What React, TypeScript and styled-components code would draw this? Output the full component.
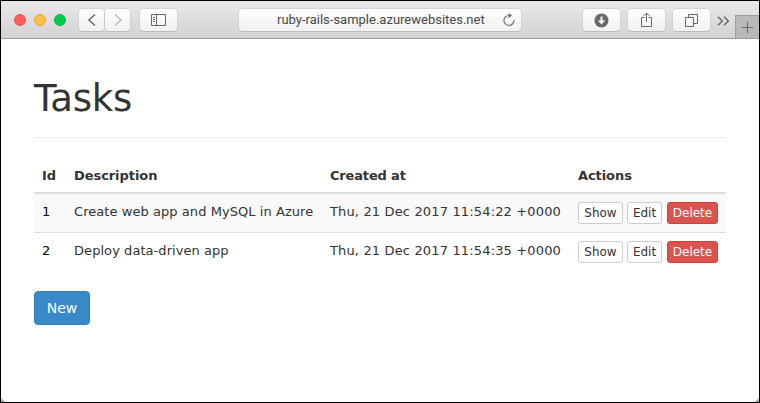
import React from "react";
import styled, { createGlobalStyle } from "styled-components";

const GlobalStyle = createGlobalStyle`
  * { box-sizing: border-box; }
  body { margin: 0; background: #000; overflow: hidden; }
`;

const Window = styled.div`
  width: 760px;
  height: 403px;
  border: 1px solid #000;
  background: #fff;
  color: #333;
  font-family: "DejaVu Sans", Verdana, sans-serif;
  font-size: 13px;
  white-space: nowrap;
`;

const Toolbar = styled.header`
  height: 38px;
  display: flex;
  align-items: flex-start;
  border-bottom: 1px solid #9d9b9d;
  background: linear-gradient(#ebe8eb, #d3d1d3);
`;

const Lights = styled.div`
  display: flex;
  gap: 8px;
  margin: 13px 13px 0 13px;
`;

const Light = styled.span<{ $fill: string; $edge: string }>`
  width: 12px;
  height: 12px;
  border-radius: 50%;
  background: ${(p) => p.$fill};
  border: 1px solid ${(p) => p.$edge};
`;

const ToolButton = styled.button<{ $width: number; $gap?: number }>`
  width: ${(p) => p.$width}px;
  height: 22px;
  margin: 8px ${(p) => p.$gap ?? 0}px 0 0;
  padding: 0;
  display: flex;
  align-items: center;
  justify-content: center;
  border: 0;
  border-radius: 4px;
  background: linear-gradient(#fefefe, #f2f1f2);
  box-shadow: 0 0 0 0.5px #c6c4c6, 0 1px 0.5px #b5b3b5;
`;

const Address = styled.div`
  width: 282px;
  height: 22px;
  margin: 8px 62px 0 0;
  display: flex;
  align-items: center;
  justify-content: space-between;
  padding: 0 5px 0 38px;
  border-radius: 4px;
  background: linear-gradient(#fefefe, #f2f1f2);
  box-shadow: 0 0 0 0.5px #c6c4c6, 0 1px 0.5px #b5b3b5;
  color: #484848;
  font: 13px/22px Roboto, sans-serif;
`;

const Overflow = styled.div`
  width: 18px;
  height: 37px;
  display: flex;
  align-items: center;
  padding-top: 2px;
`;

const NewTab = styled.div`
  flex: 1;
  height: 23px;
  margin-top: 14px;
  display: flex;
  align-items: center;
  justify-content: center;
  background: #bab8ba;
  border: solid #a09ea0;
  border-width: 1px 0 0 1px;
`;

const Page = styled.main`
  padding: 35px 33px 0;
`;

const Title = styled.h1`
  height: 64px;
  margin: 0 0 20px;
  border-bottom: 1px solid #eee;
  font-size: 37px;
  line-height: 50px;
  font-weight: 400;
  letter-spacing: -0.2px;
`;

const Table = styled.div`
  width: 692px;
`;

const Row = styled.div<{ $striped?: boolean; $last?: boolean }>`
  display: grid;
  grid-template-columns: 32px 256px 248px 156px;
  height: ${(p) => (p.$last ? 38 : 39)}px;
  padding-top: 8px;
  background: ${(p) => (p.$striped ? "#f9f9f9" : "#fff")};
  border-bottom: ${(p) => (p.$last ? 0 : 1)}px solid #ddd;
`;

const HeadRow = styled(Row)`
  height: 36px;
  border-bottom-width: 2px;
`;

const HeadCell = styled.div<{ $tracking?: number }>`
  padding: 0 8px;
  font: bold 13px/20px "DejaVu Sans", Verdana, sans-serif;
  letter-spacing: ${(p) => p.$tracking ?? 0}px;
`;

const Cell = styled.div<{ $dark?: boolean; $tracking?: number }>`
  padding: 0 8px;
  line-height: 20px;
  color: ${(p) => (p.$dark ? "#000" : "#333")};
  letter-spacing: ${(p) => p.$tracking ?? 0}px;
`;

const Actions = styled.div`
  display: flex;
  gap: 4px;
  padding: 0 8px;
`;

const ActionButton = styled.button<{ $width: number; $danger?: boolean }>`
  width: ${(p) => p.$width}px;
  height: 22px;
  margin-left: ${(p) => (p.$danger ? 1 : 0)}px;
  padding: 0;
  border: 1px solid ${(p) => (p.$danger ? "#d43f3a" : "#ccc")};
  border-radius: 3px;
  background: ${(p) => (p.$danger ? "#d9534f" : "#fff")};
  color: ${(p) => (p.$danger ? "#fff" : "#333")};
  font: 12px/20px "DejaVu Sans", Verdana, sans-serif;
`;

const NewButton = styled.button`
  width: 56px;
  height: 34px;
  margin-top: 20px;
  padding: 0;
  border: 1px solid #2e7ebb;
  border-radius: 4px;
  background: #3989c9;
  color: #fff;
  font: 14px/32px "DejaVu Sans", Verdana, sans-serif;
`;

const Icon = styled.svg`
  display: block;
  flex: none;
  fill: none;
  stroke: #686868;
`;

const Grip = styled.svg<{ $side: "left" | "right" }>`
  position: absolute;
  top: 398px;
  left: ${(p) => (p.$side === "left" ? 1 : 755)}px;
  transform: ${(p) => (p.$side === "left" ? "none" : "scaleX(-1)")};
`;

const tasks = [
  { id: 1, description: "Create web app and MySQL in Azure", created: "Thu, 21 Dec 2017 11:54:22 +0000" },
  { id: 2, description: "Deploy data-driven app", created: "Thu, 21 Dec 2017 11:54:35 +0000" },
];

export default function App() {
  return (
    <>
      <GlobalStyle />
      <Window>
        <Toolbar>
          <Lights>
            <Light $fill="#ff605b" $edge="#e8534f" />
            <Light $fill="#ffbf42" $edge="#e5a733" />
            <Light $fill="#00ca4e" $edge="#08b544" />
          </Lights>
          <ToolButton $width={25} $gap={1} aria-label="Back">
            <Icon width="10" height="14" viewBox="0 0 10 14">
              <path d="M8 1.5 2 7l6 5.5" strokeWidth="1.5" />
            </Icon>
          </ToolButton>
          <ToolButton $width={25} $gap={10} aria-label="Forward">
            <Icon width="10" height="14" viewBox="0 0 10 14">
              <path d="m2 1.5 6 5.5-6 5.5" stroke="#bcbcbc" strokeWidth="1.4" />
            </Icon>
          </ToolButton>
          <ToolButton $width={37} $gap={62} aria-label="Sidebar">
            <Icon width="15" height="12" viewBox="0 0 15 12">
              <path d="M.5.5h14v11H.5zM5.5.5v11M2 3.5h2M2 5.5h2M2 7.5h2" />
            </Icon>
          </ToolButton>
          <Address>
            <span>ruby-rails-sample.azurewebsites.net</span>
            <Icon width="14" height="14" viewBox="0 0 14 14">
              <path d="M11.9 7A5 5 0 1 1 7 2.5h1" stroke="#777" strokeWidth="1.2" />
              <path d="M6.5 0v5.2l3.7-2.6z" fill="#777" stroke="none" />
            </Icon>
          </Address>
          <ToolButton $width={37} $gap={8} aria-label="Downloads">
            <Icon width="15" height="15" viewBox="0 0 15 15">
              <circle cx="7.5" cy="7.5" r="7" fill="#686868" stroke="none" />
              <path d="M6.5 3.5h2v4h2.7l-3.7 4-3.7-4h2.7z" fill="#fff" stroke="none" />
            </Icon>
          </ToolButton>
          <ToolButton $width={37} $gap={8} aria-label="Share">
            <Icon width="13" height="16" viewBox="0 0 13 16">
              <path d="M4.5 5.5h-3v9h10v-9h-3M6.5 10V1M3.5 4l3-3 3 3" />
            </Icon>
          </ToolButton>
          <ToolButton $width={37} $gap={7} aria-label="Tabs">
            <Icon width="13" height="13" viewBox="0 0 13 13">
              <path d="M.5 3.5h8v9h-8zM3.5 3.5v-3h9v9h-4" />
            </Icon>
          </ToolButton>
          <Overflow>
            <Icon width="13" height="10" viewBox="0 0 13 10">
              <path d="m1 .7 4.3 4.3L1 9.3M7 .7 11.3 5 7 9.3" strokeWidth="1.5" />
            </Icon>
          </Overflow>
          <NewTab>
            <Icon width="11" height="11" viewBox="0 0 11 11">
              <path d="M5.5 0v11M0 5.5h11" />
            </Icon>
          </NewTab>
        </Toolbar>
        <Page>
          <Title>Tasks</Title>
          <Table>
            <HeadRow>
              <HeadCell>Id</HeadCell>
              <HeadCell $tracking={-0.07}>Description</HeadCell>
              <HeadCell $tracking={-0.17}>Created at</HeadCell>
              <HeadCell $tracking={-0.08}>Actions</HeadCell>
            </HeadRow>
            {tasks.map((task, i) => (
              <Row key={task.id} $striped={i % 2 === 0} $last={i === tasks.length - 1}>
                <Cell $dark>{task.id}</Cell>
                <Cell $tracking={0.06}>{task.description}</Cell>
                <Cell $tracking={0.15}>{task.created}</Cell>
                <Actions>
                  <ActionButton $width={45}>Show</ActionButton>
                  <ActionButton $width={35}>Edit</ActionButton>
                  <ActionButton $width={51} $danger>Delete</ActionButton>
                </Actions>
              </Row>
            ))}
          </Table>
          <NewButton>New</NewButton>
        </Page>
        <Grip $side="left" width="4" height="4" viewBox="0 0 4 4"><path d="M0 0 4 4H0z" fill="#aaa" /></Grip>
        <Grip $side="right" width="4" height="4" viewBox="0 0 4 4"><path d="M0 0 4 4H0z" fill="#aaa" /></Grip>
      </Window>
    </>
  );
}
